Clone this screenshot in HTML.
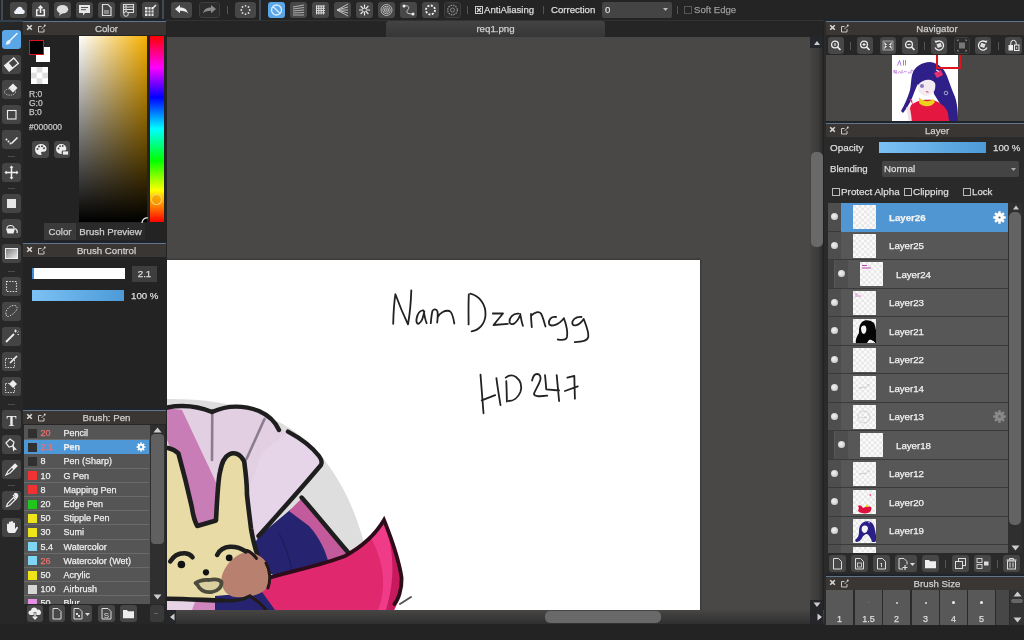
<!DOCTYPE html>
<html><head><meta charset="utf-8">
<style>
*{box-sizing:border-box;margin:0;padding:0}
html,body{width:1024px;height:640px;overflow:hidden;background:#232323;font-family:"Liberation Sans",sans-serif;color:#ddd;font-size:10px;-webkit-font-smoothing:antialiased}
body>div,body>svg{will-change:transform}
.a,.hdr,.brow,.lrow{-webkit-text-stroke:0.25px currentColor}
.a{position:absolute}
.btn{position:absolute;width:17px;height:16px;border-radius:3px;background:#474747}
.btn svg{position:absolute;left:0;top:0}
.sep{position:absolute;width:1.5px;background:#3e4a58}
.tsep{position:absolute;width:1px;height:8px;top:6px;background:#555}
.hdr{position:absolute;height:14px;background:#3a3634;border-top:1px solid #64748a;box-shadow:0 -2px 0 #1d242c;text-align:center;padding-left:24px;font-size:9.7px;line-height:13px;color:#cfcfcf}
.hdr .x{position:absolute;left:4px;top:2px}
.tool{position:absolute;left:2px;width:19px;height:19px;border-radius:3px;background:#444}
.tool svg{position:absolute;left:0;top:0}
.brow{position:absolute;left:0;width:125px;height:14.2px;background:#555;border-bottom:1px solid #6a6a6a;font-size:9px;line-height:15px;color:#eee}
.brow .sw{position:absolute;left:3.5px;top:2.5px;width:9px;height:9px}
.brow .n{position:absolute;left:16.5px;top:0}
.brow .t{position:absolute;left:39.5px;top:0}
.lrow{position:absolute;left:0;width:180px;height:28.5px;background:#575757;border-bottom:1px solid #3a3a3a;font-size:9.7px;color:#f2f2f2}
.lrow .eye{position:absolute;left:0;top:0;width:12.5px;height:27.5px;background:#4e4e4e}
.lrow .dot{position:absolute;left:2.5px;top:10.3px;width:7px;height:7px;border-radius:50%;background:radial-gradient(circle at 40% 40%,#f4f4f4,#bbb)}
.lrow .th{position:absolute;left:24.5px;top:2px;width:23px;height:24px;overflow:hidden;background:conic-gradient(#fbfbfb 25%,#e8e8e8 0 50%,#fbfbfb 0 75%,#e8e8e8 0) 0 0/5.5px 5.5px}
.lrow .nm{position:absolute;left:60px;top:8.8px;line-height:12px}
.bs{position:absolute;top:589px;width:27px;height:36px;background:#585858;text-align:center;font-size:9px;color:#ddd}
</style></head><body>

<!-- ============ TOP TOOLBAR ============ -->
<div class="a" style="left:0;top:0;width:1024px;height:21px;background:#242424"></div>
<div class="sep" style="left:1px;top:0;height:21px"></div>
<div class="a" style="left:0;top:20px;width:167px;height:2px;background:#33414e"></div>


<!-- toolbar icons -->
<div class="btn" style="left:10px;top:2px"><svg width="17" height="16"><path d="M5.5 12h7a2.2 2.2 0 0 0 .2-4.4 3 3 0 0 0-5.8-1A2.2 2.2 0 0 0 5.5 8.5a1.8 1.8 0 0 0 0 3.5z" fill="#eef3fb"/></svg></div>
<div class="btn" style="left:32px;top:2px"><svg width="17" height="16"><path d="M6.5 8h-1.8v5.5h7.6v-5.5h-1.8" fill="none" stroke="#eee" stroke-width="1.5"/><path d="M8.5 11V4.5M6.5 6.3l2-2.2 2 2.2" fill="none" stroke="#eee" stroke-width="1.6"/></svg></div>
<div class="btn" style="left:54px;top:2px"><svg width="17" height="16"><ellipse cx="8.5" cy="7.3" rx="5.7" ry="4.3" fill="#ddd"/><path d="M6 10.5l-1 3.2 3.5-2.5z" fill="#ddd"/></svg></div>
<div class="btn" style="left:76px;top:2px"><svg width="17" height="16"><path d="M3 3h11v8h-5l-2 2.5v-2.5h-4z" fill="#e6e6e6"/><path d="M5 5.5h7M5 7.7h5" stroke="#555" stroke-width="1"/></svg></div>
<div class="btn" style="left:98px;top:2px"><svg width="17" height="16"><path d="M4.5 2.5h5.5l3 3v8h-8.5z" fill="none" stroke="#ddd" stroke-width="1.2"/><path d="M6 9h5M6 11h5" stroke="#ccc" stroke-width="1"/></svg></div>
<div class="btn" style="left:120px;top:2px"><svg width="17" height="16"><path d="M3.5 2.5h10v8h-10z" fill="none" stroke="#ddd" stroke-width="1.1"/><path d="M3.5 5h10M3.5 7.5h10M6 2.5v8" stroke="#ddd" stroke-width="1"/><circle cx="6" cy="12" r="2.3" fill="#474747" stroke="#ddd" stroke-width="1"/></svg></div>
<div class="btn" style="left:142px;top:2px"><svg width="17" height="16"><path d="M3 5h8.5v9h-8.5z" fill="#e6e6e6"/><path d="M3 8h8.5M3 11h8.5M6 5v9M9 5v9" stroke="#474747" stroke-width="1"/><path d="M10 7l4-4" stroke="#eee" stroke-width="1.4"/></svg></div>
<div class="sep" style="left:162px;top:0;height:21px"></div>
<div class="btn" style="left:171px;top:2px;width:21px"><svg width="21" height="16"><path d="M4 7l5-4v2.5c4 0 7 1.5 8 6-1.5-2-4-2.8-8-2.8v2.5z" fill="#eee"/></svg></div>
<div class="btn" style="left:199px;top:2px;width:21px;background:#2c2c2c;border:1px solid #3e3e3e"><svg width="21" height="16" style="left:-1px;top:-1px"><path d="M17 7l-5-4v2.5c-4 0-7 1.5-8 6 1.5-2 4-2.8 8-2.8v2.5z" fill="#8a8a8a"/></svg></div>
<div class="tsep" style="left:227px"></div>
<div class="btn" style="left:235px;top:2px;width:21px"><svg width="21" height="16"><g fill="#ddd"><circle cx="10.5" cy="3.8" r="0.9"/><circle cx="10.5" cy="12.2" r="0.9"/><circle cx="6.3" cy="8" r="0.9"/><circle cx="14.7" cy="8" r="0.9"/><circle cx="7.5" cy="5" r="0.9"/><circle cx="13.5" cy="11" r="0.9"/><circle cx="13.5" cy="5" r="0.9"/><circle cx="7.5" cy="11" r="0.9"/></g></svg></div>
<div class="sep" style="left:259px;top:0;height:21px"></div>
<div class="btn" style="left:268px;top:2px;background:#5aa6e6"><svg width="17" height="16"><circle cx="8.5" cy="8" r="5" fill="none" stroke="#d7ecff" stroke-width="1.3"/><path d="M5 4.5l7 7" stroke="#d7ecff" stroke-width="1.3"/></svg></div>
<div class="btn" style="left:290px;top:2px"><svg width="17" height="16"><g stroke="#bbb" stroke-width="0.9"><path d="M3 5l11-2M3 7l11-1.5M3 9l11-1M3 11l11-.5M3 13l11 0"/></g></svg></div>
<div class="btn" style="left:312px;top:2px"><svg width="17" height="16"><g stroke="#ddd" stroke-width="1"><path d="M4 4h9M4 6.3h9M4 8.6h9M4 10.9h9M4.5 3.5v9M6.8 3.5v9M9.1 3.5v9M11.4 3.5v9"/></g></svg></div>
<div class="btn" style="left:334px;top:2px"><svg width="17" height="16"><g stroke="#ccc" stroke-width="0.9"><path d="M3 8L14 2M3 8L14 5M3 8L14 8M3 8L14 11M3 8L14 14"/></g></svg></div>
<div class="btn" style="left:356px;top:2px"><svg width="17" height="16"><g stroke="#e6e6e6" stroke-width="1.2"><path d="M8.5 2.5v11M3 8h11M4.6 4l7.8 8M12.4 4L4.6 12"/></g><circle cx="8.5" cy="8" r="1.6" fill="#474747"/></svg></div>
<div class="btn" style="left:378px;top:2px"><svg width="17" height="16"><g fill="none" stroke="#ccc" stroke-width="0.8"><circle cx="8.5" cy="8" r="5.5"/><circle cx="8.5" cy="8" r="3.8"/><circle cx="8.5" cy="8" r="2.2"/><circle cx="8.5" cy="8" r="0.8"/></g></svg></div>
<div class="btn" style="left:400px;top:2px"><svg width="17" height="16"><path d="M4 4c4-1 6 1 4 3.5s-2 4.5 5 4.5" fill="none" stroke="#ccc" stroke-width="1"/><circle cx="4" cy="4" r="1.5" fill="#eee"/><circle cx="13" cy="12" r="1.5" fill="#eee"/></svg></div>
<div class="btn" style="left:422px;top:2px"><svg width="17" height="16"><circle cx="8.5" cy="8" r="4.5" fill="none" stroke="#eee" stroke-width="1.8" stroke-dasharray="2 1.5"/></svg></div>
<div class="btn" style="left:444px;top:2px;background:#2c2c2c;border:1px solid #3e3e3e"><svg width="17" height="16" style="left:-1px;top:-1px"><circle cx="8.5" cy="8" r="4.8" fill="none" stroke="#888" stroke-width="1.4" stroke-dasharray="1.6 0.9"/><circle cx="8.5" cy="8" r="2" fill="none" stroke="#888" stroke-width="1"/></svg></div>
<div class="tsep" style="left:467px"></div>
<div class="a" style="left:475px;top:6px;width:8px;height:8px;border:1px solid #ccc"><svg width="6" height="6" class="a" style="left:0;top:0"><path d="M1 1l4 4M5 1L1 5" stroke="#ddd" stroke-width="1.2"/></svg></div>
<div class="a" style="left:484px;top:4px;font-size:9.6px;line-height:12px;color:#ddd">AntiAliasing</div>
<div class="tsep" style="left:543px"></div>
<div class="a" style="left:551px;top:4px;font-size:9.6px;line-height:12px;color:#ddd">Correction</div>
<div class="a" style="left:602px;top:2px;width:70px;height:16px;border-radius:2px;background:#444"></div>
<div class="a" style="left:605px;top:4px;font-size:9.6px;line-height:12px;color:#ddd">0</div>
<svg class="a" style="left:663px;top:8px" width="5" height="4"><path d="M0 0h5l-2.5 3z" fill="#bbb"/></svg>
<div class="tsep" style="left:677px"></div>
<div class="a" style="left:684px;top:6px;width:8px;height:8px;border:1px solid #555"></div>
<div class="a" style="left:694px;top:4px;font-size:9.6px;line-height:12px;color:#999">Soft Edge</div>

<!-- ============ TAB BAR ============ -->
<div class="a" style="left:167px;top:20px;width:657px;height:1px;background:#323232"></div>
<div class="a" style="left:167px;top:21px;width:657px;height:16px;background:#252525"></div>
<div class="a" style="left:386px;top:21px;width:219px;height:16px;border-radius:3px 3px 0 0;background:linear-gradient(#434343,#363636);text-align:center;font-size:9.7px;line-height:16px;color:#cfcfcf">req1.png</div>

<!-- ============ CANVAS ============ -->
<div class="a" style="left:167px;top:37px;width:643px;height:573px;background:#4a4847"></div>
<div class="a" style="left:167px;top:260px;width:533px;height:350px;background:#fff;box-shadow:0 -1.5px 0 #3d3b3a,1.5px 0 0 #3d3b3a"></div>


<!-- drawing -->
<svg class="a" style="left:167px;top:260px" width="533" height="350" viewBox="167 260 533 350">
<g fill="none" stroke="#222" stroke-width="1.8" stroke-linecap="round" stroke-linejoin="round">
<path d="M393.2 323.8C393.5 312 394.5 300 395.4 294.2C399 304 404 316 408 324.3C410 313 411 300 411.3 290.4"/>
<path d="M423.3 310.3C420 310 417.5 314 416.6 318.5C416 322 417 324.5 419 323.5C421.5 322 423.5 316 424.3 311.5M423.8 311C424.5 316 425.3 320 426.6 323.2"/>
<path d="M430.8 323.2C431.2 318 431.8 313.5 432.5 310.8C434 308.8 436.5 309 437.5 311.5C438 315 437.6 319 437.2 322.5M437.5 317.5C440 312.5 445 310 449.5 311C452.5 312.5 453.5 318 454.3 323.5"/>
<path d="M468.8 294.5C468.3 305 468.6 316 468.6 324.4M470.3 293.7C480 296 486 305 485.5 315C485 324 479 330 471.6 331.3"/>
<path d="M492.8 313.5L503 313.5L493.5 325L507.9 323.8"/>
<path d="M518.5 313.7C513 313 509 318 509.5 322C510.5 326 516 325 520 315.5M520.2 314C521 318 521.5 322 522.9 325.8"/>
<path d="M531.8 327.2C531.3 322 531 318 531 314M531 316C534 312 539 311 541 313.5C543 317 544 322 545.5 326.5"/>
<path d="M556 317C551 316 548.5 320 549 323.5C550 327 558 326 563.9 318.3M563.9 318.3C566 324 568 331 567 337C566 341 561 340 557.8 339.5"/>
<path d="M581.5 317C575 316.5 572 320.5 572.3 323.5C573 327 579 326 583.7 319M583.7 319C586 325 589 332 588.3 337C587.5 341 580 342 574.8 342.2"/>
<path d="M480.5 374.6C481.5 387 482.5 400 483.5 413.3M481.7 400.4L495.2 395.2M496.4 378.2C497.5 387 499 396 500.5 405.1"/>
<path d="M506.3 381.1C506.6 388 506.8 395 506.9 401.6M505.7 377.6C509 375 513 375 516 377C521 381 522 387 520.4 392C518 398 513 401 508.7 401"/>
<path d="M532.1 380.5C533 376 535 374 537 374C540 374 541 377 540.3 380C539 385 535 390 533.9 394C535 397 540 396.5 547.3 395.7"/>
<path d="M545 375.2C545.5 380 546 385 546.2 389.3L559.1 390.5M556.7 375.2C557.5 384 558.3 392 559.1 401"/>
<path d="M567.3 377.6L574.3 375.8C574.5 384 574.7 391 574.9 398.7M564.9 391L577.8 386.4"/>
</g>
<!-- gray shadow arc -->
<path d="M167 399C230 398 285 415 318 452C342 480 358 515 366 552L360 600L167 610Z" fill="#dedede"/>
<!-- umbrella lavender -->
<path d="M167 407C180 405 195 405 212 412C225 406 240 404 259 411C270 416 276 422 281 430L288 432C300 440 312 448 321 460L321 466C300 490 280 512 258 538L240 560L167 560Z" fill="#e2cfe2"/>
<path d="M288 432C300 440 312 448 321 460L321 466C300 490 280 512 258 538L245 500L262 452Z" fill="#e6d4e9"/>
<!-- pink stripe -->
<path d="M167 408L182 410C196 440 212 473 224 500L220 522L197 526C188 495 178 465 167 440Z" fill="#c97db6"/>
<!-- ribs -->
<path d="M212.3 410L212 460M264.5 419L246.5 459" stroke="#8a7d8e" stroke-width="2.6" fill="none" stroke-linecap="round"/>
<!-- navy panel -->
<path d="M252 548L259 536L290 510L300 504C310 520 320 535 326 548C332 565 335 572 336 575L285 580L262 570Z" fill="#262370"/>
<path d="M289 511L301.6 498.5C316 515 333 535 348 552L329 564C326 552 320 538 309 526Z" fill="#c35a9c"/>
<path d="M279 533C288 550 292 568 293 580" stroke="#1c1a55" stroke-width="1" fill="none"/>
<!-- cape -->
<path d="M258 580C290 570 320 566 345 556C365 545 378 530 384 520C392 540 399 560 402 578C402 592 398 603 394 610L250 610Z" fill="#e0286f"/>
<path d="M370 536C380 528 384 522 386 522C392 540 399 560 402 578C402 592 398 603 394 610L378 610C386 590 386 565 370 536Z" fill="#f03c88"/>
<path d="M392 540C398 560 402 578 400 595L394 610L386 610C392 590 396 565 388 535Z" fill="#c71a5c"/>
<path d="M250 585C258 595 262 605 266 610L240 610Z" fill="#c71a5c"/>
<!-- umbrella outlines -->
<g fill="none" stroke="#1e1e1e" stroke-width="4.4" stroke-linecap="round" stroke-linejoin="round">
<path d="M167 407.5C180 405 195 405 212 412C225 406 240 404 259 411C268 415 275 421 279 430"/>
<path d="M288 431.6C300 438 312 447 319 456C322 460 322 463 321 465C300 490 280 512 258.5 536"/>
<path d="M301.6 497.5C318 516 333 535 348 552.2"/>
</g>
<path d="M258 581C290 571 320 566 345 556C365 545 377 532 384 520C392 540 399 560 401.6 578C402 590 398 600 394.4 604" fill="none" stroke="#2e0c1a" stroke-width="3.8" stroke-linecap="round"/>
<path d="M400 604L411 597" stroke="#555" stroke-width="2" stroke-linecap="round"/>
<!-- bunny head -->
<path d="M167 446C172 448 176 451 178.4 453.4C183 470 188 490 191.8 507C193 515 195 522 197.2 526L216 520.5C217 500 218 480 220 472C222 462 224 457 229 454.5C234 452 240 453 244.2 461.5C246 475 247 490 246.9 493.7C248 505 250 520 251 528.6C253 540 255 548 257.6 555.4L222 600L167 599Z" fill="#e8dba5"/>
<!-- bottom strip -->
<path d="M167 601L218 602L218 610L167 610Z" fill="#e7d2e6"/>
<path d="M195 602L218 602L218 610L192 610Z" fill="#cf85bd"/>
<path d="M215 596L262 592L275 610L215 610Z" fill="#262370"/>
<g fill="none" stroke="#1e1e1e" stroke-width="4.6" stroke-linecap="round" stroke-linejoin="round">
<path d="M168 448C173 449 176 451 178.4 453.4C183 470 188 490 191.8 507C193 515 195 522 197.2 526L216 520.5C217 500 218 480 220 472C222 462 224 457 229 454.5C234 452 240 453 244.2 461.5C246 475 247 490 246.9 493.7C248 505 250 520 251 528.6C253 540 255 548 257.6 555.4"/>
<path d="M167 598.8C185 599 205 600 222 600.5"/>
</g>
<!-- hand -->
<path d="M221.2 580C222 570 230 559 240 554C250 550 260 554 266 562C271 570 271 582 265 590C258 596 245 598 235 597C227 596 222 590 221.2 580Z" fill="#b8806f"/>
<path d="M247 550.5C251 552 254 555 256.4 558.4M266 563C270 570 271 580 268 588M250 596C256 600 262 604 266 610" fill="none" stroke="#241818" stroke-width="3" stroke-linecap="round"/>
<path d="M222 600C232 602 242 600 250 596" fill="none" stroke="#1e1e1e" stroke-width="3.5" stroke-linecap="round"/>
<!-- face -->
<g fill="none" stroke="#1e1e1e" stroke-width="4.6" stroke-linecap="round">
<path d="M170.3 561.4C174 555 180 553 184.9 553.2C188 553.5 191 555 192.5 557.3"/>
<path d="M217.1 554.9C220 549 224 547 230 546.7C236 546.5 241 548 245.8 551.4"/>
</g>
<circle cx="181.4" cy="564.5" r="3.8" fill="#111"/>
<circle cx="229.2" cy="557.8" r="3.4" fill="#111"/>
<circle cx="206" cy="572.3" r="3.1" fill="#111"/>
<path d="M195.5 583C200 580 205 579.5 209 580C214 579 219 579 221.5 582C222 587 218 591 212 592C205 593 200 590 197.5 585Z" fill="#d9cf9f" stroke="#4b4a3c" stroke-width="3.8" stroke-linejoin="round"/>
</svg>

<!-- vertical scrollbar -->
<div class="a" style="left:810px;top:37px;width:14px;height:573px;background:linear-gradient(90deg,#464544,#3c3b3a 60%,#262626)"></div>
<div class="a" style="left:810px;top:37px;width:13px;height:11px;background:#24272b"></div>
<div class="a" style="left:823px;top:21px;width:3px;height:604px;background:#1f2124"></div>
<div class="a" style="left:811px;top:152px;width:12px;height:95px;border-radius:5px;background:#696969"></div>
<!-- horizontal scrollbar -->
<div class="a" style="left:167px;top:610px;width:657px;height:14px;background:linear-gradient(#474645,#2f2f2f)"></div>
<div class="a" style="left:810px;top:600px;width:13px;height:24px;background:#24262a"></div>
<div class="a" style="left:167px;top:610px;width:9px;height:14px;background:#24262a"></div>
<div class="a" style="left:545px;top:611px;width:116px;height:12px;border-radius:5px;background:#696969"></div>


<svg class="a" style="left:813px;top:40px" width="8" height="6"><path d="M1 5h6l-3-4z" fill="#ccc"/></svg>
<svg class="a" style="left:813px;top:602px" width="8" height="6"><path d="M0.5 0.5h7l-3.5 4.5z" fill="#ccc"/></svg>
<svg class="a" style="left:817px;top:613px" width="6" height="8"><path d="M0.5 0.5v7l4.5-3.5z" fill="#ccc"/></svg>
<svg class="a" style="left:169px;top:613px" width="6" height="8"><path d="M5.5 0.5v7l-4.5-3.5z" fill="#ccc"/></svg>
<!-- ============ LEFT TOOL STRIP ============ -->
<div class="a" style="left:0;top:22px;width:23px;height:602px;background:#272727"></div>


<!-- tools -->
<div class="tool" style="top:30px;background:#5aa6e6"><svg width="19" height="19"><path d="M15 3.5L8 10.5" stroke="#e8f4ff" stroke-width="1.6" stroke-linecap="round"/><path d="M7.5 10c-2 .2-3.5 1.5-3.8 4.8 2.8-.2 4.6-1.2 5-3.4z" fill="#e8f4ff"/></svg></div>
<div class="tool" style="top:55px"><svg width="19" height="19"><g transform="rotate(-40 9.5 9.5)"><rect x="3.5" y="6" width="12" height="7" fill="none" stroke="#eee" stroke-width="1.3"/><rect x="3.5" y="6" width="5" height="7" fill="#eee"/></g></svg></div>
<div class="tool" style="top:80px"><svg width="19" height="19"><path d="M11 3.5l4.5 4.5-4.5 4.5-4.5-4.5z" fill="#eee"/><ellipse cx="8" cy="12" rx="5.5" ry="3.2" fill="none" stroke="#ccc" stroke-width="0.9" stroke-dasharray="1.3 1"/></svg></div>
<div class="tool" style="top:105px"><svg width="19" height="19"><rect x="5.5" y="5.5" width="8.5" height="8.5" fill="none" stroke="#eee" stroke-width="1.1"/></svg></div>
<div class="tool" style="top:130px"><svg width="19" height="19"><path d="M9.5 13.5l6-6" stroke="#eee" stroke-width="1.6"/><g fill="#eee"><circle cx="4.5" cy="9.5" r="1"/><circle cx="6.5" cy="11.5" r="1"/><circle cx="8.5" cy="13.5" r="1"/></g></svg></div>
<div class="a" style="left:8px;top:156px;width:7px;height:1px;background:#4a4a4a"></div>
<div class="tool" style="top:163px"><svg width="19" height="19"><g stroke="#eee" stroke-width="1.5"><path d="M9.5 3.5v12M3.5 9.5h12"/></g><g fill="#eee"><path d="M9.5 2.5l2 2.2h-4zM9.5 16.5l2-2.2h-4zM2.5 9.5l2.2-2v4zM16.5 9.5l-2.2-2v4z"/></g></svg></div>
<div class="a" style="left:8px;top:188px;width:7px;height:1px;background:#4a4a4a"></div>
<div class="tool" style="top:194px"><svg width="19" height="19"><rect x="5" y="5" width="9" height="9" fill="#e6e6e6"/></svg></div>
<div class="tool" style="top:219px"><svg width="19" height="19"><path d="M4 9.5h9l-1.5 5h-6z" fill="#eee"/><path d="M5 9.5c0-4 7-4 7 0" fill="none" stroke="#eee" stroke-width="1.2"/><path d="M13 9.5c2 1 2.5 3 2 4.5" fill="none" stroke="#eee" stroke-width="1.3"/></svg></div>
<div class="tool" style="top:244px"><svg width="19" height="19"><defs><linearGradient id="gg" x1="0" y1="0" x2="1" y2="1"><stop offset="0" stop-color="#777"/><stop offset="1" stop-color="#eee"/></linearGradient></defs><rect x="3.5" y="4.5" width="12" height="10" fill="url(#gg)" stroke="#eee" stroke-width="1"/></svg></div>
<div class="a" style="left:8px;top:271px;width:7px;height:1px;background:#4a4a4a"></div>
<div class="tool" style="top:277px"><svg width="19" height="19"><rect x="4.5" y="4.5" width="10" height="10" fill="none" stroke="#ddd" stroke-width="1.1" stroke-dasharray="1.5 1.3"/></svg></div>
<div class="tool" style="top:302px"><svg width="19" height="19"><path d="M4 12c-1-3 3-8 7-8.5s5 2 3.5 4.5-4 4.5-7 6-3 0-3.5-2z" fill="none" stroke="#ccc" stroke-width="1" stroke-dasharray="1.5 1.2"/></svg></div>
<div class="tool" style="top:327px"><svg width="19" height="19"><path d="M4 15l8-8" stroke="#eee" stroke-width="1.8"/><g stroke="#eee" stroke-width="0.9"><path d="M13.5 2.5v3M12 4h3M15.5 5.5l1-1M15.5 7.5h1.5"/></g></svg></div>
<div class="tool" style="top:352px"><svg width="19" height="19"><rect x="3.5" y="6.5" width="9" height="9" fill="none" stroke="#ddd" stroke-width="1" stroke-dasharray="1.4 1.2"/><path d="M8 11l7-7" stroke="#eee" stroke-width="1.7"/></svg></div>
<div class="tool" style="top:377px"><svg width="19" height="19"><rect x="3.5" y="6.5" width="9" height="9" fill="none" stroke="#ddd" stroke-width="1" stroke-dasharray="1.4 1.2"/><path d="M11 3l4 4-4 4-4-4z" fill="#eee"/></svg></div>
<div class="a" style="left:8px;top:404px;width:7px;height:1px;background:#4a4a4a"></div>
<div class="tool" style="top:410px"><svg width="19" height="19"><text x="9.5" y="15.5" text-anchor="middle" font-family="Liberation Serif" font-weight="bold" font-size="15" fill="#eee">T</text></svg></div>
<div class="tool" style="top:435px"><svg width="19" height="19"><path d="M4 8l4-4 4 3-1 4-4 1z" fill="none" stroke="#eee" stroke-width="1.2"/><path d="M10 9l5 6-2.5-.3-1.2 2z" fill="#eee"/></svg></div>
<div class="tool" style="top:460px"><svg width="19" height="19"><path d="M4 15l2-4 7-7 2 2-7 7z" fill="none" stroke="#eee" stroke-width="1.2"/><path d="M9.5 7.5l2 2 3.5-3.5-2-2z" fill="#eee"/></svg></div>
<div class="a" style="left:8px;top:485px;width:7px;height:1px;background:#4a4a4a"></div>
<div class="tool" style="top:491px"><svg width="19" height="19"><path d="M4.5 15.5l1-3 6-6 2 2-6 6z" fill="none" stroke="#eee" stroke-width="1.2"/><path d="M11 4l4 4M12.5 3c1-1 2.5-.5 3 .5s.5 2-.5 3z" fill="#eee" stroke="#eee" stroke-width="1.2"/></svg></div>
<div class="tool" style="top:518px"><svg width="19" height="19"><path d="M5 10V6.5a1 1 0 0 1 2 0V9V4.5a1 1 0 0 1 2 0V9V4a1 1 0 0 1 2 0v5V5.5a1 1 0 0 1 2 0V11l1.5-2a1 1 0 0 1 1.5 1l-3 5H7.5C6 15 5 13 5 11.5z" fill="#eee"/></svg></div>

<!-- ============ COLOR PANEL ============ -->
<div class="a" style="left:23px;top:21px;width:144px;height:222px;background:#232323"></div>
<div class="hdr" style="left:23px;top:21px;width:143px">Color<svg class="a" style="left:3px;top:2px" width="21" height="10"><path d="M1.2 1.2l4.6 4.6M5.8 1.2L1.2 5.8" stroke="#d8d8d8" stroke-width="1.6"/><path d="M15.5 2.5h-3v5.5h5.5v-3" fill="none" stroke="#c8c8c8" stroke-width="1"/><path d="M15.5 5l3-3" fill="none" stroke="#c8c8c8" stroke-width="0.9"/><circle cx="18.8" cy="1.5" r="0.9" fill="#ddd"/></svg></div>
<div class="a" style="left:79px;top:36px;width:68px;height:186px;background:linear-gradient(to bottom,rgba(0,0,0,0),#000),linear-gradient(to right,#fff,#f6b000)"></div>
<div class="a" style="left:150px;top:36px;width:14px;height:186px;background:linear-gradient(to bottom,#f00,#f0f 17%,#00f 33%,#0ff 50%,#0f0 67%,#ff0 83%,#f00)"></div>


<!-- color panel contents -->
<div class="a" style="left:36px;top:47px;width:14px;height:15px;background:#fff"></div>
<div class="a" style="left:29px;top:40px;width:15px;height:15px;background:#000;border:1.7px solid #e0141e"></div>
<div class="a" style="left:31px;top:67px;width:17px;height:17px;background:conic-gradient(#dedede 25%,#fff 0 50%,#dedede 0 75%,#fff 0) 0 0/11.34px 11.34px"></div>
<div class="a" style="left:29px;top:90px;font-size:8.5px;line-height:9.2px;color:#c4c4c4">R:0<br>G:0<br>B:0</div>
<div class="a" style="left:29px;top:122px;font-size:8.5px;line-height:10px;color:#c4c4c4">#000000</div>
<div class="btn" style="left:32px;top:141px;width:17px;height:17px"><svg width="17" height="17"><path d="M8.5 3a5.5 5.5 0 0 0 0 11c1.2 0 1.3-1 .8-1.6s-.3-1.6.8-1.6h1.5a3 3 0 0 0 2.9-3C14.5 5 12 3 8.5 3z" fill="#eee"/><g fill="#474747"><circle cx="5.5" cy="8" r="1"/><circle cx="7" cy="5.5" r="1"/><circle cx="10" cy="5.2" r="1"/><circle cx="12" cy="7.3" r="1"/></g></svg></div>
<div class="btn" style="left:54px;top:141px;width:16px;height:17px"><svg width="16" height="17"><path d="M7 3a5 5 0 0 0 0 10c1 0 1-.8.7-1.3s-.2-1.4.7-1.4h1.3a2.7 2.7 0 0 0 2.6-2.7C12.3 4.8 10 3 7 3z" fill="#eee"/><g fill="#474747"><circle cx="4.5" cy="7.5" r=".9"/><circle cx="6" cy="5.2" r=".9"/><circle cx="8.7" cy="5" r=".9"/></g><rect x="8.5" y="10" width="6" height="4" fill="#eee" stroke="#474747" stroke-width=".8"/></svg></div>
<svg class="a" style="left:140px;top:215px" width="10" height="8"><path d="M2 8a5 5 0 0 1 6-5" fill="none" stroke="#eee" stroke-width="1.2"/></svg>
<div class="a" style="left:151px;top:194px;width:11px;height:11px;border-radius:50%;border:1.2px solid rgba(255,215,130,0.9);background:rgba(240,150,0,0.55)"></div>
<!-- tabs -->
<div class="a" style="left:44px;top:223px;width:32px;height:17px;background:#3a3a3a;font-size:9.7px;line-height:18px;text-align:center;color:#cfcfcf">Color</div>
<div class="a" style="left:76px;top:223px;width:69px;height:17px;background:#2a2a2a;font-size:9.7px;line-height:17px;text-align:center;color:#cfcfcf">Brush Preview</div>

<!-- ============ BRUSH CONTROL ============ -->
<div class="a" style="left:23px;top:243px;width:144px;height:167px;background:#232323"></div>
<div class="hdr" style="left:23px;top:243px;width:143px">Brush Control<svg class="a" style="left:3px;top:2px" width="21" height="10"><path d="M1.2 1.2l4.6 4.6M5.8 1.2L1.2 5.8" stroke="#d8d8d8" stroke-width="1.6"/><path d="M15.5 2.5h-3v5.5h5.5v-3" fill="none" stroke="#c8c8c8" stroke-width="1"/><path d="M15.5 5l3-3" fill="none" stroke="#c8c8c8" stroke-width="0.9"/><circle cx="18.8" cy="1.5" r="0.9" fill="#ddd"/></svg></div>


<!-- brush control contents -->
<div class="a" style="left:32px;top:268px;width:93px;height:11px;background:#fff;border-left:2px solid #3d8ed6"></div>
<div class="a" style="left:132px;top:266px;width:25px;height:16px;background:#3e3e3e;font-size:9.7px;line-height:16px;text-align:center;color:#ddd">2.1</div>
<div class="a" style="left:32px;top:290px;width:92px;height:11px;background:linear-gradient(90deg,#7cc1f4,#4c9ad8)"></div>
<div class="a" style="left:131px;top:290px;font-size:9.7px;line-height:12px;color:#ddd">100 %</div>

<!-- ============ BRUSH PANEL ============ -->
<div class="a" style="left:23px;top:410px;width:144px;height:214px;background:#262626"></div>
<div class="hdr" style="left:23px;top:410px;width:143px">Brush: Pen<svg class="a" style="left:3px;top:2px" width="21" height="10"><path d="M1.2 1.2l4.6 4.6M5.8 1.2L1.2 5.8" stroke="#d8d8d8" stroke-width="1.6"/><path d="M15.5 2.5h-3v5.5h5.5v-3" fill="none" stroke="#c8c8c8" stroke-width="1"/><path d="M15.5 5l3-3" fill="none" stroke="#c8c8c8" stroke-width="0.9"/><circle cx="18.8" cy="1.5" r="0.9" fill="#ddd"/></svg></div>


<!-- brush list -->
<div class="a" style="left:24px;top:425px;width:126px;height:179px;overflow:hidden;background:#555">
<div class="brow" style="top:1.0px;"><div class="sw" style="background:#303030"></div><div class="n" style="color:#ee7070;">20</div><div class="t" style="">Pencil</div></div>
<div class="brow" style="top:15.2px;background:#4f98d8;border-bottom-color:#4f98d8;"><div class="sw" style="background:#303030"></div><div class="n" style="color:#ee7070;">2.1</div><div class="t" style="font-weight:bold;">Pen</div><svg class="a" style="left:112px;top:2px" width="10" height="10"><g fill="#fff"><circle cx="5" cy="5" r="3.2"/><g stroke="#fff" stroke-width="1.6"><path d="M5 0.5v9M0.5 5h9M1.8 1.8l6.4 6.4M8.2 1.8L1.8 8.2"/></g></g><circle cx="5" cy="5" r="1.3" fill="#4f98d8"/></svg></div>
<div class="brow" style="top:29.4px;"><div class="sw" style="background:#303030"></div><div class="n" style="">8</div><div class="t" style="">Pen (Sharp)</div></div>
<div class="brow" style="top:43.6px;"><div class="sw" style="background:#f03232"></div><div class="n" style="">10</div><div class="t" style="">G Pen</div></div>
<div class="brow" style="top:57.8px;"><div class="sw" style="background:#f03232"></div><div class="n" style="">8</div><div class="t" style="">Mapping Pen</div></div>
<div class="brow" style="top:72.0px;"><div class="sw" style="background:#22c41e"></div><div class="n" style="">20</div><div class="t" style="">Edge Pen</div></div>
<div class="brow" style="top:86.2px;"><div class="sw" style="background:#efe41a"></div><div class="n" style="">50</div><div class="t" style="">Stipple Pen</div></div>
<div class="brow" style="top:100.4px;"><div class="sw" style="background:#efe41a"></div><div class="n" style="">30</div><div class="t" style="">Sumi</div></div>
<div class="brow" style="top:114.6px;"><div class="sw" style="background:#7fd6f4"></div><div class="n" style="">5.4</div><div class="t" style="">Watercolor</div></div>
<div class="brow" style="top:128.8px;"><div class="sw" style="background:#7fd6f4"></div><div class="n" style="color:#ee7070;">26</div><div class="t" style="">Watercolor (Wet)</div></div>
<div class="brow" style="top:143.0px;"><div class="sw" style="background:#efe41a"></div><div class="n" style="">50</div><div class="t" style="">Acrylic</div></div>
<div class="brow" style="top:157.2px;"><div class="sw" style="background:#d6d6d6"></div><div class="n" style="">100</div><div class="t" style="">Airbrush</div></div>
<div class="brow" style="top:171.4px;"><div class="sw" style="background:#e88ee8"></div><div class="n" style="">50</div><div class="t" style="">Blur</div></div>
</div>
<div class="a" style="left:150px;top:425px;width:15px;height:179px;background:#2f2f2f"></div>
<div class="a" style="left:151px;top:434px;width:13px;height:110px;border-radius:4px;background:#606060"></div>
<svg class="a" style="left:153px;top:426px" width="9" height="7"><path d="M0.5 6.5h8l-4-5z" fill="#ccc"/></svg>
<svg class="a" style="left:153px;top:594px" width="9" height="7"><path d="M0.5 0.5h8l-4 5z" fill="#ccc"/></svg>
<!-- brush buttons -->
<div class="btn" style="left:27px;top:605px;width:16px;height:17px"><svg width="16" height="17"><path d="M3.5 10a2.3 2.3 0 0 1 .4-4.6 3.3 3.3 0 0 1 6.4-.6 2.5 2.5 0 0 1 1.8 5.2z" fill="#eee"/><path d="M8 7v7.5" stroke="#474747" stroke-width="2.6"/><path d="M8 7.5v6.5M5.8 11.5L8 14l2.2-2.5" fill="none" stroke="#eee" stroke-width="1.3"/></svg></div>
<div class="btn" style="left:49px;top:605px;width:16px;height:17px"><svg width="16" height="17"><path d="M4 3.5h5l3 3v7.5h-8z" fill="none" stroke="#ddd" stroke-width="1"/></svg></div>
<div class="btn" style="left:71px;top:605px;width:21px;height:17px"><svg width="21" height="17"><path d="M3 3.5h5l3 3v7.5h-8z" fill="none" stroke="#ddd" stroke-width="1"/><g fill="#ddd"><rect x="5" y="8" width="2" height="2"/><rect x="7" y="10" width="2" height="2"/></g><path d="M14 8h5l-2.5 3z" fill="#ddd"/></svg></div>
<div class="btn" style="left:98px;top:605px;width:17px;height:17px"><svg width="17" height="17"><path d="M4 3.5h6l3 3v7.5h-9z" fill="none" stroke="#ddd" stroke-width="1"/><text x="8.5" y="12.5" text-anchor="middle" font-size="8" fill="#ddd" font-family="Liberation Sans">S</text></svg></div>
<div class="btn" style="left:120px;top:605px;width:17px;height:17px"><svg width="17" height="17"><path d="M3 5h4l1 1.3h6v7h-11z" fill="#eee"/></svg></div>
<div class="btn" style="left:150px;top:605px;width:14px;height:17px;background:#3a3a3a"><svg width="14" height="17"><path d="M4 8.5h4" stroke="#666" stroke-width="1"/></svg></div>

<!-- ============ RIGHT PANEL ============ -->
<div class="a" style="left:824px;top:21px;width:200px;height:604px;background:#2a2a2a"></div>
<div class="hdr" style="left:826px;top:21px;width:198px">Navigator<svg class="a" style="left:3px;top:2px" width="21" height="10"><path d="M1.2 1.2l4.6 4.6M5.8 1.2L1.2 5.8" stroke="#d8d8d8" stroke-width="1.6"/><path d="M15.5 2.5h-3v5.5h5.5v-3" fill="none" stroke="#c8c8c8" stroke-width="1"/><path d="M15.5 5l3-3" fill="none" stroke="#c8c8c8" stroke-width="0.9"/><circle cx="18.8" cy="1.5" r="0.9" fill="#ddd"/></svg></div>
<div class="a" style="left:826px;top:55px;width:198px;height:68px;background:#4a4847"></div>
<!-- nav toolbar -->
<div class="a" style="left:826px;top:35px;width:198px;height:20px;background:#262626"></div>
<div class="btn" style="left:828px;top:37px;width:16px;height:17px"><svg width="16" height="17"><circle cx="7" cy="7.5" r="3.4" fill="none" stroke="#eee" stroke-width="1.3"/><path d="M9.5 10l3 3" stroke="#eee" stroke-width="1.7"/><path d="M7 6v3" stroke="#eee" stroke-width="1.1"/></svg></div>
<div class="tsep" style="left:850px;top:42px"></div>
<div class="btn" style="left:857px;top:37px;width:16px;height:17px"><svg width="16" height="17"><circle cx="7" cy="7.5" r="3.4" fill="none" stroke="#eee" stroke-width="1.3"/><path d="M9.5 10l3 3" stroke="#eee" stroke-width="1.7"/><path d="M7 6v3M5.5 7.5h3" stroke="#eee" stroke-width="1.1"/></svg></div>
<div class="btn" style="left:880px;top:37px;width:16px;height:17px"><svg width="16" height="17"><rect x="3" y="4" width="10" height="9" fill="#5a5a5a" stroke="#bbb" stroke-width="0.8"/><path d="M4 5l3 2.5-2 1zM12 5l-3 2.5 2 1zM4 12l3-2.5-2-1zM12 12l-3-2.5 2-1z" fill="#eee"/></svg></div>
<div class="btn" style="left:902px;top:37px;width:16px;height:17px"><svg width="16" height="17"><circle cx="7" cy="7.5" r="3.4" fill="none" stroke="#eee" stroke-width="1.3"/><path d="M9.5 10l3 3" stroke="#eee" stroke-width="1.7"/><path d="M5.5 7.5h3" stroke="#eee" stroke-width="1.1"/></svg></div>
<div class="tsep" style="left:924px;top:42px"></div>
<div class="btn" style="left:931px;top:37px;width:16px;height:17px"><svg width="16" height="17"><path d="M4 10.5A4.5 4.5 0 1 0 5.5 4.8" fill="none" stroke="#eee" stroke-width="1.3"/><path d="M3.5 3.5l3 .5-1.5 2.5z" fill="#eee"/><rect x="6" y="6.5" width="4.5" height="4" fill="#ddd" transform="rotate(-20 8 8.5)"/></svg></div>
<div class="btn" style="left:954px;top:37px;width:16px;height:17px;background:#2c2c2c;border:1px solid #3e3e3e"><svg width="16" height="17" style="left:-1px;top:-1px"><rect x="5" y="5.5" width="6" height="6" fill="#777"/><path d="M3.5 4v-1h1.5M12.5 4v-1h-1.5M3.5 13v1h1.5M12.5 13v1h-1.5" stroke="#888" stroke-width="1" fill="none"/></svg></div>
<div class="btn" style="left:975px;top:37px;width:16px;height:17px"><svg width="16" height="17"><path d="M12 10.5A4.5 4.5 0 1 1 10.5 4.8" fill="none" stroke="#eee" stroke-width="1.3"/><path d="M12.5 3.5l-3 .5 1.5 2.5z" fill="#eee"/><rect x="5.5" y="6.5" width="4.5" height="4" fill="#ddd" transform="rotate(20 8 8.5)"/></svg></div>
<div class="tsep" style="left:998px;top:42px"></div>
<div class="btn" style="left:1005px;top:37px;width:17px;height:17px"><svg width="17" height="17"><rect x="3.5" y="8" width="4.5" height="5.5" fill="#eee"/><rect x="9.5" y="8" width="4.5" height="5.5" fill="none" stroke="#eee" stroke-width="1"/><path d="M5.8 8V6a2.7 2.7 0 0 1 5.4 0v2" fill="none" stroke="#eee" stroke-width="1"/><path d="M11.7 10v2" stroke="#eee" stroke-width="0.8"/></svg></div>
<!-- nav thumbnail -->
<div class="a" style="left:892px;top:55px;width:66px;height:67px;background:#fff;overflow:hidden">
<svg width="66" height="67">
<path d="M5.5 10.5l2-5 1.5 5M11.5 5v5.5M13.5 5v5.5" stroke="#a868d8" stroke-width="0.9" fill="none"/>
<path d="M2 18.5v-3.5l2.2 3.5v-3.5M6 18.5c0-2.5 3-2.5 3 0M10 15v3.5M11.5 17.5c1-2 2 0 3-1M16 18.5c0-2 2-2 2-0M19 18.5v-3c1-1 2 0 2 1M22 18.5v-3.5" stroke="#bb66dd" stroke-width="0.8" fill="none"/>
<path d="M20 20C22 12 30 7 38 7C46 8 52 13 55 21C58 29 60 35 63 42C65 48 66 55 66 67L57 67C55 60 51 53 47 47L42 39C41 33 40 27 37 24L28 24C26 28 24 33 22 38C20 44 16 52 11 58L9 56C13 49 16 42 18 35C19 30 19 25 20 20Z" fill="#2e2088"/>
<path d="M26 28C27 22 33 19 38 21C43 23 44 29 43 34C42 38 38 41 34 41C30 41 26 37 26 33Z" fill="#f4ebf0"/>
<path d="M24 27C27 20 34 18 40 21C43 23 44 26 45 30L41 26C37 24 31 24 26 30Z" fill="#2e2088"/>
<circle cx="30" cy="31" r="2" fill="#8a78c0"/>
<path d="M34 36.5l2.5 0.8" stroke="#d04868" stroke-width="1.2"/>
<path d="M19 50C25 45 33 44 41 45C48 47 54 52 56 58L57 67L17 67C17 60 17 55 19 50Z" fill="#e3173f"/>
<path d="M27 42C30 46 36 48 41 44L43 47C40 52 32 53 27 48Z" fill="#efd21c"/>
<path d="M42 18l7-3 2 5-6 3z" fill="#e8306e"/>
<path d="M44 15l3 1.5" stroke="#ffd8e6" stroke-width="1.3"/>
<circle cx="54" cy="38" r="1.8" fill="none" stroke="#ddd" stroke-width="0.7"/>
<path d="M16 52c1 5 2 10 2 15" stroke="#f2e2e8" stroke-width="3.5" fill="none"/>
<path d="M21 50l-4 -6 3 1z" fill="#e83070"/>
</svg></div>
<div class="a" style="left:936px;top:55px;width:25px;height:14px;border:2px solid #e0141e;border-top:none"></div>
<!-- layer controls -->
<div class="a" style="left:830px;top:142px;font-size:9.9px;line-height:12px;color:#ddd">Opacity</div>
<div class="a" style="left:879px;top:142px;width:107px;height:11px;background:linear-gradient(90deg,#7cc1f4,#4c9ad8)"></div>
<div class="a" style="left:993px;top:142px;font-size:9.7px;line-height:12px;color:#ddd">100 %</div>
<div class="a" style="left:830px;top:163px;font-size:9.7px;line-height:12px;color:#ddd">Blending</div>
<div class="a" style="left:882px;top:161px;width:137px;height:16px;border-radius:2px;background:#444;font-size:9.7px;line-height:16px;padding-left:2px;color:#ddd">Normal</div>
<svg class="a" style="left:1011px;top:168px" width="5" height="4"><path d="M0 0h5l-2.5 3z" fill="#aaa"/></svg>
<div class="a" style="left:832px;top:188px;width:8px;height:8px;border:1px solid #bbb"></div>
<div class="a" style="left:841px;top:186px;font-size:9.9px;line-height:12px;color:#ddd">Protect Alpha</div>
<div class="a" style="left:904px;top:188px;width:8px;height:8px;border:1px solid #bbb"></div>
<div class="a" style="left:913px;top:186px;font-size:9.9px;line-height:12px;color:#ddd">Clipping</div>
<div class="a" style="left:963px;top:188px;width:8px;height:8px;border:1px solid #bbb"></div>
<div class="a" style="left:972px;top:186px;font-size:9.7px;line-height:12px;color:#ddd">Lock</div>
<!-- layer list -->
<div class="a" style="left:828px;top:203px;width:180px;height:350px;overflow:hidden;background:#575757">
<div class="lrow" style="top:0.0px"><div class="eye" style="left:0px"><div class="dot"></div></div><div class="a" style="left:12.5px;top:0;width:167.5px;height:28.5px;background:#5096d2"></div><div class="th" style="left:24.5px"></div><div class="nm" style="left:61px;font-weight:bold;">Layer26</div><svg class="a" style="left:164.5px;top:7.5px" width="13" height="13"><g stroke="#fff" stroke-width="2.4"><path d="M6.5 0.3v12.4M0.3 6.5h12.4M2.1 2.1l8.8 8.8M10.9 2.1l-8.8 8.8"/></g><circle cx="6.5" cy="6.5" r="4.4" fill="#fff"/><circle cx="6.5" cy="6.5" r="1.1" fill="#555"/></svg></div>
<div class="lrow" style="top:28.5px"><div class="eye" style="left:0px"><div class="dot"></div></div><div class="th" style="left:24.5px"></div><div class="nm" style="left:61px;">Layer25</div></div>
<div class="lrow" style="top:57.0px"><div class="a" style="left:0;top:0;width:6px;height:27.5px;background:#3f3f3f"></div><div class="eye" style="left:7px"><div class="dot"></div></div><div class="th" style="left:31.5px"><svg class="a" style="left:0;top:0" width="24" height="24"><path d="M2 3.5h5M2 6h9" stroke="#c04ab0" stroke-width="1.2"/></svg></div><div class="nm" style="left:68px;">Layer24</div></div>
<div class="lrow" style="top:85.5px"><div class="eye" style="left:0px"><div class="dot"></div></div><div class="th" style="left:24.5px"><svg class="a" style="left:0;top:0" width="24" height="24"><path d="M2 5h6M2 3h3" stroke="#d070c8" stroke-width="0.8"/></svg></div><div class="nm" style="left:61px;">Layer23</div></div>
<div class="lrow" style="top:114.0px"><div class="eye" style="left:0px"><div class="dot"></div></div><div class="th" style="left:24.5px"><svg class="a" style="left:0;top:0" width="24" height="24"><path d="M9 3C12 0 18 1 21 4C23 8 23 13 24 17L24 24L21 24C20 21 18 20 16 21L14 24L3 24C2 21 4 17 6 14C6 10 6 6 9 3Z" fill="#050505"/><path d="M8 9C9 6 12 6 13 8C14 11 13 14 11 15C9 15 8 12 8 9Z" fill="#f4f4f4"/><path d="M20 22l2 2M17 23l1 1" stroke="#ddd" stroke-width="1"/></svg></div><div class="nm" style="left:61px;">Layer21</div></div>
<div class="lrow" style="top:142.5px"><div class="eye" style="left:0px"><div class="dot"></div></div><div class="th" style="left:24.5px"></div><div class="nm" style="left:61px;">Layer22</div></div>
<div class="lrow" style="top:171.0px"><div class="eye" style="left:0px"><div class="dot"></div></div><div class="th" style="left:24.5px"><svg class="a" style="left:0;top:0" width="24" height="24"><path d="M6 12c3 0 6-1 8-1M14 8l3 2" stroke="#aaa" stroke-width="0.6" fill="none"/></svg></div><div class="nm" style="left:61px;">Layer14</div></div>
<div class="lrow" style="top:199.5px"><div class="eye" style="left:0px"><div class="dot"></div></div><div class="th" style="left:24.5px"><svg class="a" style="left:0;top:0" width="24" height="24"><circle cx="11" cy="12" r="6" fill="none" stroke="#bbb" stroke-width="0.6"/><path d="M8 12c2 1 4 1 6 0" stroke="#aaa" stroke-width="0.5" fill="none"/></svg></div><div class="nm" style="left:61px;">Layer13</div><svg class="a" style="left:164.5px;top:7.5px" width="13" height="13"><g stroke="#8a8a8a" stroke-width="2.4"><path d="M6.5 0.3v12.4M0.3 6.5h12.4M2.1 2.1l8.8 8.8M10.9 2.1l-8.8 8.8"/></g><circle cx="6.5" cy="6.5" r="4.4" fill="#8a8a8a"/><circle cx="6.5" cy="6.5" r="1.5" fill="#666"/></svg></div>
<div class="lrow" style="top:228.0px"><div class="a" style="left:0;top:0;width:6px;height:27.5px;background:#3f3f3f"></div><div class="eye" style="left:7px"><div class="dot"></div></div><div class="th" style="left:31.5px"></div><div class="nm" style="left:68px;">Layer18</div></div>
<div class="lrow" style="top:256.5px"><div class="eye" style="left:0px"><div class="dot"></div></div><div class="th" style="left:24.5px"><svg class="a" style="left:0;top:0" width="24" height="24"><path d="M6 12c3 0 6-1 8-1M14 8l3 2" stroke="#aaa" stroke-width="0.6" fill="none"/></svg></div><div class="nm" style="left:61px;">Layer12</div></div>
<div class="lrow" style="top:285.0px"><div class="eye" style="left:0px"><div class="dot"></div></div><div class="th" style="left:24.5px"><svg class="a" style="left:0;top:0" width="24" height="24"><path d="M5 16C7 14 9 16 10 18C12 17 15 16 18 17C19 19 18 22 15 23C11 24 7 23 5 21C6 19 6 17 5 16Z" fill="#e0103c"/><path d="M12 17l2-3 2 3z" fill="#f0d020"/><path d="M16 5l2-1 0 2z" fill="#e8306a"/></svg></div><div class="nm" style="left:61px;">Layer20</div></div>
<div class="lrow" style="top:313.5px"><div class="eye" style="left:0px"><div class="dot"></div></div><div class="th" style="left:24.5px"><svg class="a" style="left:0;top:0" width="24" height="24"><path d="M7 7C9 2 16 1 19 4C22 7 22 12 23 16C24 19 24 21 22 23L19 23C18 19 16 16 14 15C12 15 10 17 9 19C8 21 6 23 3 23L2 21C5 19 6 16 6 13C6 11 6 9 7 7Z" fill="#2a1f86"/><path d="M9 8C11 6 14 6 15 9C15 12 13 14 11 14C9 13 8 11 9 8Z" fill="#f6f2f6"/><path d="M15 3l2 1" stroke="#ddd" stroke-width="0.8"/></svg></div><div class="nm" style="left:61px;">Layer19</div></div>
<div class="lrow" style="top:342.0px"><div class="eye" style="left:0px"><div class="dot"></div></div><div class="th" style="left:24.5px"></div><div class="nm" style="left:61px;"></div></div>
</div>
<div class="a" style="left:1008px;top:203px;width:14px;height:350px;background:#2f2f2f"></div>
<div class="a" style="left:1009px;top:212px;width:12px;height:313px;border-radius:5px;background:#636363"></div>
<svg class="a" style="left:1012px;top:204px" width="8" height="6"><path d="M1 5.5h6l-3-4z" fill="#ccc"/></svg>
<svg class="a" style="left:1011px;top:545px" width="9" height="7"><path d="M0.5 0.5h8l-4 5z" fill="#ccc"/></svg>
<!-- layer buttons -->
<div class="btn" style="left:829px;top:555px;width:17px;height:17px"><svg width="17" height="17"><path d="M4.5 3.5h5l3 3v7.5h-8z" fill="none" stroke="#ddd" stroke-width="1"/></svg></div>
<div class="btn" style="left:851px;top:555px;width:17px;height:17px"><svg width="17" height="17"><path d="M4.5 3.5h5l3 3v7.5h-8z" fill="none" stroke="#ddd" stroke-width="1"/><rect x="6.5" y="8" width="4" height="4" fill="none" stroke="#ddd" stroke-width=".8"/></svg></div>
<div class="btn" style="left:873px;top:555px;width:17px;height:17px"><svg width="17" height="17"><path d="M4.5 3.5h5l3 3v7.5h-8z" fill="none" stroke="#ddd" stroke-width="1"/><path d="M8.5 12V8l-1 1" fill="none" stroke="#ddd" stroke-width=".9"/></svg></div>
<div class="btn" style="left:895px;top:555px;width:22px;height:17px"><svg width="22" height="17"><path d="M4 3.5h5l3 3v3" fill="none" stroke="#ddd" stroke-width="1"/><path d="M4 3.5v10.5h4" fill="none" stroke="#ddd" stroke-width="1"/><path d="M10 10v5M7.5 12.5h5" stroke="#ddd" stroke-width="1.2"/><path d="M15 8h5l-2.5 3z" fill="#ddd"/></svg></div>
<div class="btn" style="left:922px;top:555px;width:17px;height:17px"><svg width="17" height="17"><path d="M3 5h4l1 1.3h6v7h-11z" fill="#eee"/></svg></div>
<div class="tsep" style="left:945px;top:560px"></div>
<div class="btn" style="left:952px;top:555px;width:17px;height:17px"><svg width="17" height="17"><rect x="6.5" y="3.5" width="7" height="7" fill="none" stroke="#ddd" stroke-width="1"/><rect x="3.5" y="6.5" width="7" height="7" fill="#474747" stroke="#ddd" stroke-width="1"/></svg></div>
<div class="btn" style="left:974px;top:555px;width:17px;height:17px"><svg width="17" height="17"><rect x="3" y="3.5" width="5" height="4" fill="none" stroke="#ddd" stroke-width=".9"/><rect x="3" y="9.5" width="5" height="4" fill="none" stroke="#ddd" stroke-width=".9"/><rect x="10" y="6.5" width="4.5" height="4" fill="#ddd"/></svg></div>
<div class="tsep" style="left:997px;top:560px"></div>
<div class="btn" style="left:1003px;top:555px;width:17px;height:17px"><svg width="17" height="17"><path d="M3.5 5h10M6.5 5V3.5h4V5" fill="none" stroke="#ddd" stroke-width="1"/><rect x="4.5" y="6" width="8" height="8" fill="none" stroke="#ddd" stroke-width="1"/><path d="M7 7.5v5M10 7.5v5" stroke="#ddd" stroke-width="1"/></svg></div>

<div class="hdr" style="left:826px;top:123px;width:198px">Layer<svg class="a" style="left:3px;top:2px" width="21" height="10"><path d="M1.2 1.2l4.6 4.6M5.8 1.2L1.2 5.8" stroke="#d8d8d8" stroke-width="1.6"/><path d="M15.5 2.5h-3v5.5h5.5v-3" fill="none" stroke="#c8c8c8" stroke-width="1"/><path d="M15.5 5l3-3" fill="none" stroke="#c8c8c8" stroke-width="0.9"/><circle cx="18.8" cy="1.5" r="0.9" fill="#ddd"/></svg></div>

<!-- brush size -->
<div class="bs" style="left:826px"><div class="a" style="left:0;width:100%;top:25px;line-height:10px">1</div></div>
<div class="bs" style="left:855px"><div class="a" style="left:13px;top:13px;width:1px;height:1px;border-radius:50%;background:#888"></div><div class="a" style="left:0;width:100%;top:25px;line-height:10px">1.5</div></div>
<div class="bs" style="left:883px"><div class="a" style="left:13px;top:13px;width:1.5px;height:1.5px;border-radius:50%;background:#ccc"></div><div class="a" style="left:0;width:100%;top:25px;line-height:10px">2</div></div>
<div class="bs" style="left:912px"><div class="a" style="left:12.5px;top:12.5px;width:2px;height:2px;border-radius:50%;background:#ddd"></div><div class="a" style="left:0;width:100%;top:25px;line-height:10px">3</div></div>
<div class="bs" style="left:940px"><div class="a" style="left:12px;top:12px;width:3px;height:3px;border-radius:50%;background:#eee"></div><div class="a" style="left:0;width:100%;top:25px;line-height:10px">4</div></div>
<div class="bs" style="left:968px"><div class="a" style="left:11.5px;top:11.5px;width:3.5px;height:3.5px;border-radius:50%;background:#eee"></div><div class="a" style="left:0;width:100%;top:25px;line-height:10px">5</div></div>
<div class="a" style="left:996px;top:589px;width:13px;height:36px;background:#474747"></div>
<div class="a" style="left:1010px;top:589px;width:14px;height:36px;background:#333"></div>
<div class="a" style="left:1011px;top:599px;width:12px;height:4px;border-radius:2px;background:#666"></div>
<svg class="a" style="left:1013px;top:591px" width="9" height="6"><path d="M0.5 5.5h8l-4-5z" fill="#ccc"/></svg>
<svg class="a" style="left:1013px;top:617px" width="9" height="6"><path d="M0.5 0.5h8l-4 5z" fill="#ccc"/></svg>
<div class="hdr" style="left:826px;top:576px;width:198px">Brush Size<svg class="a" style="left:3px;top:2px" width="21" height="10"><path d="M1.2 1.2l4.6 4.6M5.8 1.2L1.2 5.8" stroke="#d8d8d8" stroke-width="1.6"/><path d="M15.5 2.5h-3v5.5h5.5v-3" fill="none" stroke="#c8c8c8" stroke-width="1"/><path d="M15.5 5l3-3" fill="none" stroke="#c8c8c8" stroke-width="0.9"/><circle cx="18.8" cy="1.5" r="0.9" fill="#ddd"/></svg></div>

</body></html>
